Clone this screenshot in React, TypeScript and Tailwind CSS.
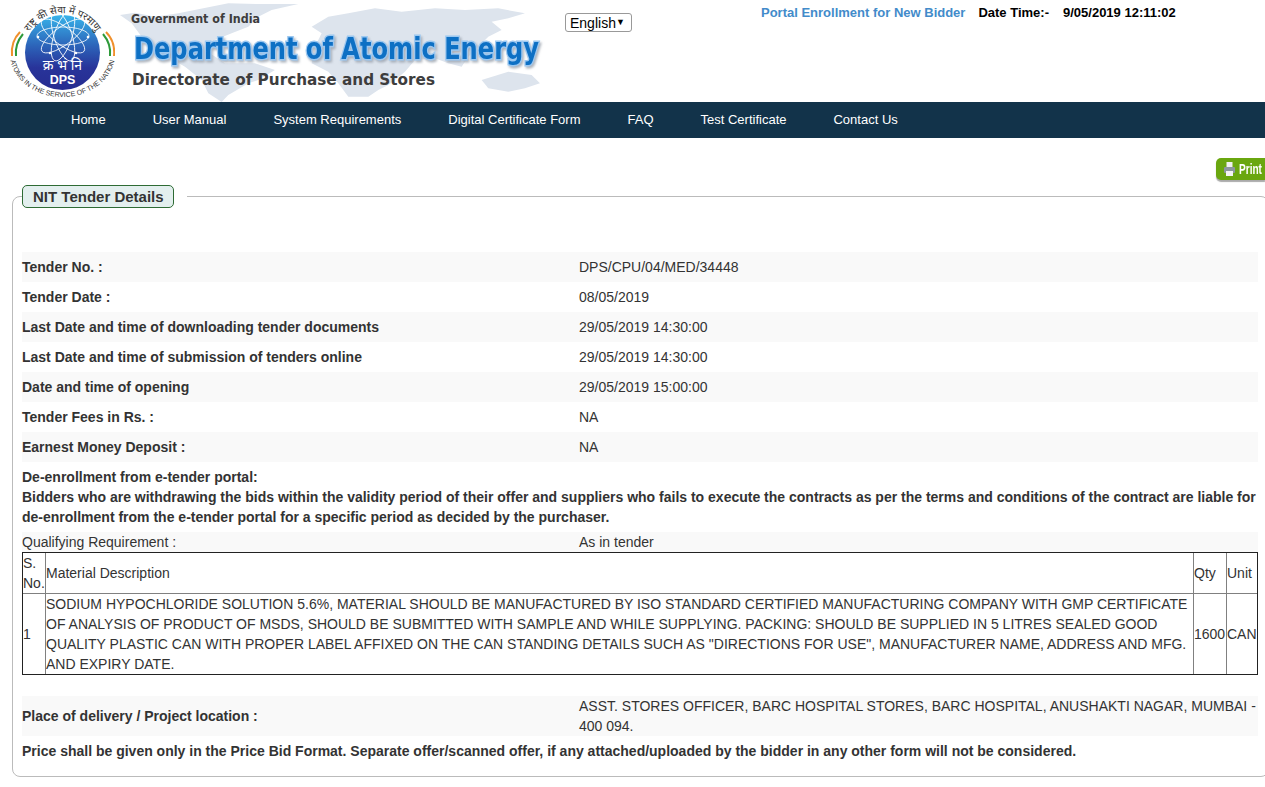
const navItems = [
  'Home',
  'User Manual',
  'System Requirements',
  'Digital Certificate Form',
  'FAQ',
  'Test Certificate',
  'Contact Us',
]

const topRows = [
  ['Tender No. :', 'DPS/CPU/04/MED/34448'],
  ['Tender Date :', '08/05/2019'],
  ['Last Date and time of downloading tender documents', '29/05/2019 14:30:00'],
  ['Last Date and time of submission of tenders online', '29/05/2019 14:30:00'],
  ['Date and time of opening', '29/05/2019 15:00:00'],
  ['Tender Fees in Rs. :', 'NA'],
  ['Earnest Money Deposit :', 'NA'],
]

function Logo() {
  return (
    <svg width="115" height="102" viewBox="0 0 115 102" className="shrink-0">
      <defs>
        <path id="arc-bottom" d="M 10 54 A 52.5 43 0 0 0 115 54" />
        <path id="arc-top" d="M 24 46 A 39 39 0 0 1 101 46" />
        <linearGradient id="disc" x1="0" y1="0" x2="0" y2="1">
          <stop offset="0" stopColor="#38b4ea" />
          <stop offset="0.42" stopColor="#2c62b8" />
          <stop offset="0.7" stopColor="#28349a" />
          <stop offset="1" stopColor="#262c90" />
        </linearGradient>
      </defs>
      <circle cx="62.5" cy="52.5" r="37.5" fill="url(#disc)" />
      <g fill="none" stroke="#fff" strokeWidth="0.8">
        <ellipse cx="63" cy="36" rx="26" ry="9" />
        <ellipse cx="63" cy="36" rx="26" ry="9" transform="rotate(36 63 36)" />
        <ellipse cx="63" cy="36" rx="26" ry="9" transform="rotate(72 63 36)" />
        <ellipse cx="63" cy="36" rx="26" ry="9" transform="rotate(108 63 36)" />
        <ellipse cx="63" cy="36" rx="26" ry="9" transform="rotate(144 63 36)" />
      </g>
      <circle cx="38" cy="37" r="1.3" fill="#fff" />
      <circle cx="88" cy="37" r="1.3" fill="#fff" />
      <circle cx="50" cy="53" r="1.3" fill="#fff" />
      <circle cx="76" cy="53" r="1.3" fill="#fff" />
      <path d="M 12 56 C 11 46 14 38 20 32" fill="none" stroke="#f0902c" strokeWidth="2" />
      <path d="M 16 56 C 15 47 18 40 23 34" fill="none" stroke="#2e9a3a" strokeWidth="2" />
      <path d="M 114 56 C 115 46 112 38 106 32" fill="none" stroke="#f0902c" strokeWidth="2" />
      <path d="M 110 56 C 111 47 108 40 103 34" fill="none" stroke="#2e9a3a" strokeWidth="2" />
      <text x="62.5" y="70" textAnchor="middle" fill="#fff" fontSize="14" fontFamily="'Noto Sans', 'Liberation Sans', sans-serif">क्र भं नि</text>
      <text x="62.5" y="84" textAnchor="middle" fill="#fff" fontSize="12.5" fontWeight="700" fontFamily="'Liberation Sans', sans-serif">DPS</text>
      <text fontSize="7" fill="#333" fontFamily="'Liberation Sans', sans-serif">
        <textPath href="#arc-bottom" startOffset="50%" textAnchor="middle">ATOMS IN THE SERVICE OF THE NATION</textPath>
      </text>
      <text fontSize="10" fill="#333" fontFamily="'Noto Sans', 'Liberation Sans', sans-serif">
        <textPath href="#arc-top" startOffset="50%" textAnchor="middle">राष्ट्र की सेवा में परमाणु</textPath>
      </text>
    </svg>
  )
}

function Banner() {
  return (
    <svg width="435" height="102" viewBox="115 0 435 102" className="shrink-0">
      <defs>
        <filter id="title-shadow" x="-5%" y="-20%" width="110%" height="150%">
          <feDropShadow dx="1.5" dy="2" stdDeviation="0.8" floodColor="#9aa3ad" floodOpacity="0.8" />
        </filter>
      </defs>
      <g fill="#dde4ed" transform="translate(115 0) scale(0.3333)">
        <path d="M15 45 L60 38 L120 50 L190 40 L340 10 L430 12 L550 12 L470 30 L430 50 L400 80 L350 100 L300 120 L270 150 L330 190 L420 190 L480 210 L430 240 L400 250 L340 285 L320 306 L280 280 L260 240 L210 200 L140 160 L80 110 L50 70 Z" />
        <path d="M640 50 L700 40 L780 25 L860 35 L960 25 L1050 30 L1150 25 L1230 40 L1180 55 L1130 65 L1160 90 L1120 110 L1080 150 L1060 170 L1040 200 L1000 190 L960 175 L900 180 L870 215 L840 240 L820 255 L790 270 L760 290 L700 290 L670 250 L640 215 L590 190 L600 140 L620 100 L590 80 Z" />
        <path d="M1100 240 L1180 215 L1250 225 L1275 250 L1230 265 L1180 275 L1120 265 Z" />
      </g>
      <text x="131" y="23" fontSize="12.5" fontWeight="700" fill="#3d3d3d" textLength="129" lengthAdjust="spacingAndGlyphs" fontFamily="'DejaVu Sans', sans-serif">Government of India</text>
      <text x="134" y="59" fontSize="30" fontWeight="700" fill="#0f6fc4" stroke="#9cc8f0" strokeWidth="3" paintOrder="stroke" textLength="405" lengthAdjust="spacingAndGlyphs" filter="url(#title-shadow)" fontFamily="'DejaVu Sans', sans-serif">Department of Atomic Energy</text>
      <text x="132" y="85" fontSize="16" fontWeight="700" fill="#3d3d3d" textLength="303" lengthAdjust="spacingAndGlyphs" fontFamily="'DejaVu Sans', sans-serif">Directorate of Purchase and Stores</text>
    </svg>
  )
}

export default function App() {
  return (
    <div className="min-h-[787px] overflow-hidden bg-white font-['Liberation_Sans',Arial,sans-serif] text-sm text-[#333]">
      {/* Header */}
      <header className="flex h-[102px]">
        <Logo />
        <Banner />
        <div className="ml-[15px] mt-[13px] flex h-[19px] w-[67px] items-center justify-between rounded-[3px] border border-[#999] pl-1 pr-1.5 text-black">
          <span>English</span>
          <span className="text-[9px]">▼</span>
        </div>
        <div className="ml-[129px] mt-[5px] flex h-4 items-center whitespace-nowrap text-[13px] font-bold text-black">
          <span className="mr-[13px] text-[#428bca]">Portal Enrollment for New Bidder</span>
          <span className="mr-[14px]">Date Time:-</span>
          <span>9/05/2019 12:11:02</span>
        </div>
      </header>

      {/* Nav */}
      <nav className="flex h-9 items-center bg-[#12334a] pl-[71px] text-[13px] text-white">
        <ul className="flex gap-[47px]">
          {navItems.map((item) => (
            <li key={item}>{item}</li>
          ))}
        </ul>
      </nav>

      {/* Print */}
      <div className="mt-5 flex justify-end">
        <div className="flex h-[22px] w-[49px] items-center gap-1 rounded-l-[5px] bg-[#6aa70f] pl-2 text-sm font-bold text-white shadow-[0_2px_1px_#aaa]">
          <svg width="11" height="14" viewBox="0 0 11 14" className="shrink-0">
            <rect x="2.5" y="0" width="6" height="5" fill="#f0f0f0" />
            <rect x="0" y="5" width="11" height="6" rx="1" fill="#8d979d" />
            <rect x="2" y="9" width="7" height="5" fill="#f4f4f4" />
          </svg>
          <span className="origin-left scale-x-[0.72]">Print</span>
        </div>
      </div>

      {/* Tender details */}
      <fieldset className="ml-3 mr-[-4px] mt-[5px] rounded-lg border border-[#bbb] pb-[15px] pl-[9px] pr-[10px]">
        <legend className="pr-[13px]">
          <div className="h-[23px] w-[152px] whitespace-nowrap rounded-[5px] border border-[#2e6b34] bg-[#e3efee] px-[10px] text-[15px] font-bold leading-[21px]">
            NIT Tender Details
          </div>
        </legend>

        <div className="mt-[44px]">
          {topRows.map(([label, value]) => (
            <div key={label} className="flex h-[30px] items-center odd:bg-[#f9f9f9]">
              <div className="w-[557px] shrink-0 font-bold">{label}</div>
              <div>{value}</div>
            </div>
          ))}
        </div>

        <div className="mt-[5px] font-bold leading-5">
          De-enrollment from e-tender portal:
          <br />
          Bidders who are withdrawing the bids within the validity period of their offer and suppliers who fails to execute the contracts as per the terms and conditions of the contract are liable for de-enrollment from the e-tender portal for a specific period as decided by the purchaser.
        </div>

        <div className="mt-[5px] flex h-5 items-center bg-[#f9f9f9]">
          <div className="w-[557px] shrink-0">Qualifying Requirement :</div>
          <div>As in tender</div>
        </div>

        <table className="w-full table-fixed border-separate border-spacing-0 border border-[#222] leading-5">
          <colgroup>
            <col className="w-[22px]" />
            <col />
            <col className="w-[33px]" />
            <col className="w-[31px]" />
          </colgroup>
          <tbody>
            <tr>
              <td>S. No.</td>
              <td className="border-l border-[#808080]">Material Description</td>
              <td className="border-l border-[#808080]">Qty</td>
              <td className="border-l border-[#808080]">Unit</td>
            </tr>
            <tr>
              <td className="border-t border-[#808080]">1</td>
              <td className="border-l border-t border-[#808080]">
                SODIUM HYPOCHLORIDE SOLUTION 5.6%, MATERIAL SHOULD BE MANUFACTURED BY ISO STANDARD CERTIFIED MANUFACTURING COMPANY WITH GMP CERTIFICATE OF ANALYSIS OF PRODUCT OF MSDS, SHOULD BE SUBMITTED WITH SAMPLE AND WHILE SUPPLYING. PACKING: SHOULD BE SUPPLIED IN 5 LITRES SEALED GOOD QUALITY PLASTIC CAN WITH PROPER LABEL AFFIXED ON THE CAN STANDING DETAILS SUCH AS "DIRECTIONS FOR USE", MANUFACTURER NAME, ADDRESS AND MFG. AND EXPIRY DATE.
              </td>
              <td className="border-l border-t border-[#808080]">1600</td>
              <td className="border-l border-t border-[#808080]">CAN</td>
            </tr>
          </tbody>
        </table>

        <div className="mt-[21px] flex items-center bg-[#f9f9f9] leading-5">
          <div className="w-[557px] shrink-0 font-bold">Place of delivery / Project location :</div>
          <div>ASST. STORES OFFICER, BARC HOSPITAL STORES, BARC HOSPITAL, ANUSHAKTI NAGAR, MUMBAI - 400 094.</div>
        </div>

        <p className="mt-[5px] font-bold leading-5">
          Price shall be given only in the Price Bid Format. Separate offer/scanned offer, if any attached/uploaded by the bidder in any other form will not be considered.
        </p>
      </fieldset>
    </div>
  )
}
